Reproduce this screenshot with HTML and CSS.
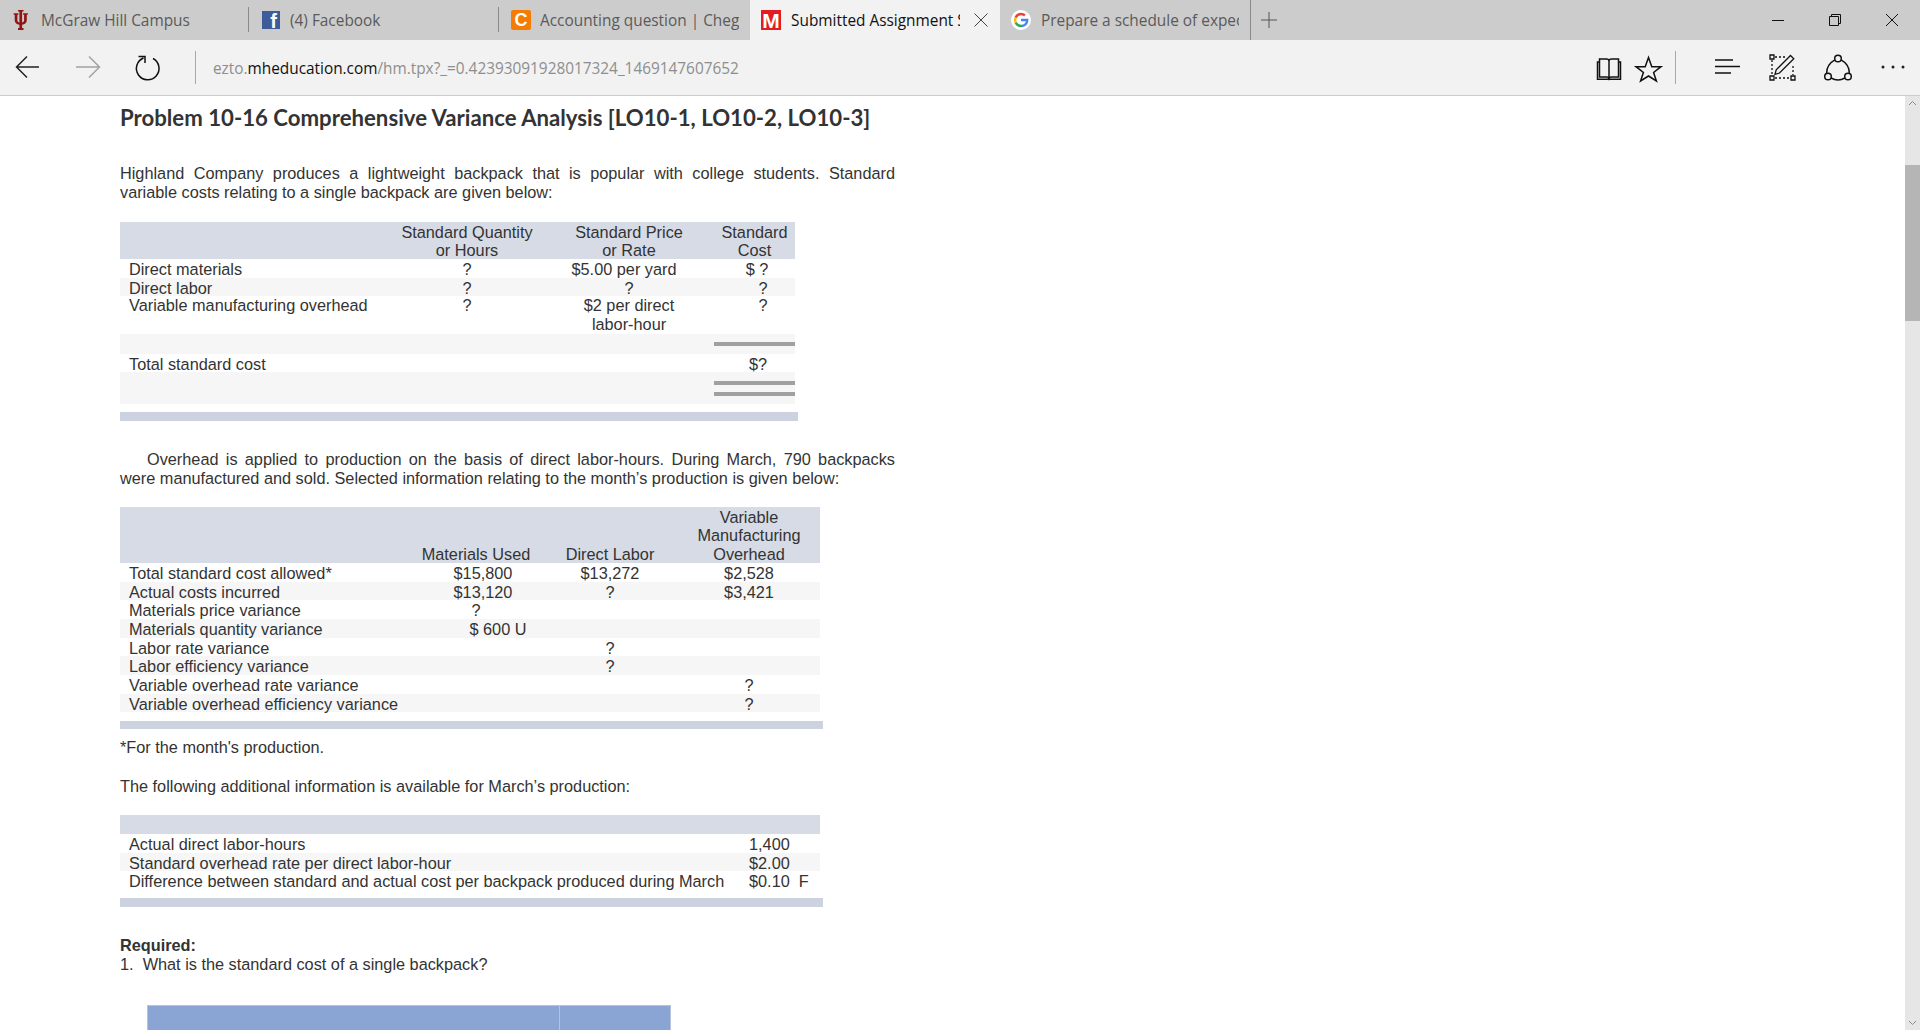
FILE: index.html
```html
<!DOCTYPE html>
<html lang="en">
<head>
<meta charset="utf-8">
<title>Submitted Assignment</title>
<link rel="stylesheet" href="styles.css">
</head>
<body>
<header class="tabbar">
  <div class="tabs">
    <div class="tab">
      <svg class="favicon" viewBox="0 0 20 20"><path fill="#8f1414" d="M7 0h5.500v1.600h-1.400v10.900c1.300-.3 2-.9 2-2.500V4.800h-1V3.200h4.700v1.600h-1V10c0 2.800-1.700 4.300-4.700 4.800V18h1.400v2H7v-2h1.400v-3.200C5.400 14.300 3.700 12.800 3.700 10V4.800h-1V3.200h4.700v1.600h-1V10c0 1.600.7 2.200 2 2.500V1.600H7z"/></svg>
      <span class="tab-title">McGraw Hill Campus</span>
      <span class="tab-sep"></span>
    </div>
    <div class="tab">
      <span class="favicon fb">f</span>
      <span class="tab-title">(4) Facebook</span>
      <span class="tab-sep"></span>
    </div>
    <div class="tab">
      <span class="favicon chegg">C</span>
      <span class="tab-title">Accounting question | Chegg</span>
    </div>
    <div class="tab active">
      <span class="favicon mh">M</span>
      <span class="tab-title">Submitted Assignment S</span>
      <svg class="tab-close" viewBox="0 0 14 14"><path d="M.5.5l13 13M13.500.5l-13 13"/></svg>
    </div>
    <div class="tab last">
      <svg class="favicon" viewBox="0 0 20 20">
        <circle cx="10" cy="10" r="10" fill="#fff"/>
        <path fill="none" stroke="#4285f4" stroke-width="2.400" d="M10 10h6.200c0 3.800-2.700 6-6.200 6"/>
        <path fill="none" stroke="#34a853" stroke-width="2.400" d="M10 16c-2.500 0-4.500-1.400-5.400-3.500"/>
        <path fill="none" stroke="#fbbc05" stroke-width="2.400" d="M4.600 12.500c-.7-1.700-.7-3.400 0-5"/>
        <path fill="none" stroke="#ea4335" stroke-width="2.400" d="M4.600 7.500C5.500 5.400 7.500 4 10 4c1.500 0 2.800.5 3.900 1.500"/>
      </svg>
      <span class="tab-title">Prepare a schedule of expected</span>
    </div>
  </div>
  <div class="newtab">
    <svg class="icon16" viewBox="0 0 16 16"><path d="M8 0v16M0 8h16"/></svg>
  </div>
  <div class="winctrls">
    <div class="winbtn"><svg class="icon14" viewBox="0 0 14 14"><path d="M1 7.500h12"/></svg></div>
    <div class="winbtn"><svg class="icon14" viewBox="0 0 14 14"><path d="M1.500 3.500h9v9h-9zM3.500 3.500v-2h9v9h-2"/></svg></div>
    <div class="winbtn"><svg class="icon14" viewBox="0 0 14 14"><path d="M1 1l12 12M13 1L1 13"/></svg></div>
  </div>
</header>

<nav class="toolbar">
  <svg class="tool back" viewBox="0 0 40 40"><path d="M31 20H8.500M19 9.500L8.500 20 19 30.500"/></svg>
  <svg class="tool next" viewBox="0 0 40 40"><path d="M8 20h23.500M21 9.500L31.500 20 21 30.500"/></svg>
  <svg class="tool next-gap" viewBox="0 0 40 40"><path d="M25 11.500A11.300 11.300 0 1 1 15.500 11M10.500 9.500H17V16"/></svg>
  <span class="tool-sep sep-left"></span>
  <div class="url"><span class="url-dim">ezto.</span><span class="url-host">mheducation.com</span><span class="url-dim">/hm.tpx?_=0.42393091928017324_1469147607652</span></div>
  <svg class="tool" viewBox="0 0 40 40"><path d="M10.500 12h7c1.500 0 2.500.7 2.500 2 0-1.300 1-2 2.500-2h7v18H22c-1 0-1.700.5-2 1.500-.3-1-1-1.500-2-1.500h-7.500zM20 14v16M10.500 15h-2v17.300h23V15h-2"/></svg>
  <svg class="tool" viewBox="0 0 40 40"><path d="M19.500 10.500l3.300 9.200h9.200l-7.400 5.800 2.800 8.500-7.900-5-7.900 5 2.800-8.500L7 19.700h9.200z"/></svg>
  <span class="tool-sep sep-right"></span>
  <svg class="tool hub" viewBox="0 0 40 40"><path d="M7 13h18M7 19.500h25M7 26h16"/></svg>
  <svg class="tool note" viewBox="0 0 40 40"><path d="M8 8h4v4H8zM8 29h4v4H8zM29 29h4v4h-4z"/><path class="dots" d="M13 10h11M10 13v15M13 31h15M31 19v9"/><path d="M28.500 8.500l3.300 3.300L17.500 26l-4.500 1.300 1.200-4.500z"/></svg>
  <svg class="tool share" viewBox="0 0 40 40"><circle cx="20" cy="11.500" r="3.300"/><circle cx="10" cy="29.500" r="3.300"/><circle cx="30" cy="29.500" r="3.300"/><path d="M16.900 12.800C12 15.500 8.500 20.500 8.600 26.400M23.100 12.800C28 15.500 31.500 20.500 31.400 26.400M13.100 31c4.300 2.500 9.500 2.500 13.800 0"/></svg>
  <svg class="tool more" viewBox="0 0 40 40"><circle cx="10" cy="20" r="1.500"/><circle cx="20" cy="20" r="1.500"/><circle cx="30" cy="20" r="1.500"/></svg>
</nav>

<div class="viewport">
  <main class="page">
    <h1 class="title">Problem 10-16 Comprehensive Variance Analysis [LO10-1, LO10-2, LO10-3]</h1>
    <p class="para first"><span class="justline">Highland Company produces a lightweight backpack that is popular with college students. Standard</span> variable costs relating to a single backpack are given below:</p>

    <table class="data t1">
      <colgroup><col class="c1-label"><col class="c1-qty"><col class="c1-price"><col class="c1-cost"></colgroup>
      <thead>
        <tr><th></th><th>Standard Quantity<br>or Hours</th><th>Standard Price<br>or Rate</th><th>Standard<br>Cost</th></tr>
      </thead>
      <tbody>
        <tr class="r19"><td class="label">Direct materials</td><td class="mid">?</td><td class="mid pr10">$5.00 per yard</td><td class="mid pl5">$ ?</td></tr>
        <tr class="alt r18"><td class="label">Direct labor</td><td class="mid">?</td><td class="mid">?</td><td class="mid pl17">?</td></tr>
        <tr class="r38"><td class="label">Variable manufacturing overhead</td><td class="mid">?</td><td class="mid">$2 per direct<br>labor-hour</td><td class="mid pl17">?</td></tr>
        <tr class="alt r20"><td class="bare"></td><td class="bare"></td><td class="bare"></td><td class="bare"><div class="single"></div></td></tr>
        <tr class="r18"><td class="label">Total standard cost</td><td></td><td></td><td class="mid pl7">$?</td></tr>
        <tr class="alt r32"><td class="bare"></td><td class="bare"></td><td class="bare"></td><td class="bare"><div class="double"></div></td></tr>
      </tbody>
    </table>
    <div class="rule r-a"></div>

    <p class="para second">Overhead is applied to production on the basis of direct labor-hours. During March, 790 backpacks were manufactured and sold. Selected information relating to the month’s production is given below:</p>

    <table class="data t2">
      <colgroup><col class="c2-label"><col class="c2-mat"><col class="c2-lab"><col class="c2-var"></colgroup>
      <thead>
        <tr><th></th><th>Materials Used</th><th>Direct Labor</th><th>Variable<br>Manufacturing<br>Overhead</th></tr>
      </thead>
      <tbody class="stripes">
        <tr><td class="label">Total standard cost allowed*</td><td class="mid pl14">$15,800</td><td class="mid">$13,272</td><td class="mid">$2,528</td></tr>
        <tr><td class="label">Actual costs incurred</td><td class="mid pl14">$13,120</td><td class="mid">?</td><td class="mid">$3,421</td></tr>
        <tr><td class="label">Materials price variance</td><td class="mid">?</td><td></td><td></td></tr>
        <tr><td class="label">Materials quantity variance</td><td class="mid pl44">$ 600 U</td><td></td><td></td></tr>
        <tr><td class="label">Labor rate variance</td><td></td><td class="mid">?</td><td></td></tr>
        <tr><td class="label">Labor efficiency variance</td><td></td><td class="mid">?</td><td></td></tr>
        <tr><td class="label">Variable overhead rate variance</td><td></td><td></td><td class="mid">?</td></tr>
        <tr><td class="label">Variable overhead efficiency variance</td><td></td><td></td><td class="mid">?</td></tr>
      </tbody>
    </table>
    <div class="rule r-b"></div>

    <p class="para note-line">*For the month's production.</p>
    <p class="para follow">The following additional information is available for March’s production:</p>

    <table class="data t3">
      <colgroup><col class="c3-label"><col class="c3-val"></colgroup>
      <thead><tr class="h19"><th></th><th></th></tr></thead>
      <tbody class="stripes">
        <tr><td class="label">Actual direct labor-hours</td><td>1,400</td></tr>
        <tr><td class="label">Standard overhead rate per direct labor-hour</td><td>$2.00</td></tr>
        <tr><td class="label">Difference between standard and actual cost per backpack produced during March</td><td>$0.10&nbsp; F</td></tr>
      </tbody>
    </table>
    <div class="rule r-c"></div>

    <p class="para req"><strong>Required:</strong><br>1.&nbsp; What is the standard cost of a single backpack?</p>

    <div class="answer"><div class="answer-a"></div><div class="answer-b"></div></div>
  </main>
  <aside class="scrollbar">
    <svg class="sb-arrow" viewBox="0 0 15 15"><path d="M4 9l3.500-3.500L11 9"/></svg>
    <div class="sb-thumb"></div>
    <svg class="sb-arrow sb-down" viewBox="0 0 15 15"><path d="M4 6l3.500 3.500L11 6"/></svg>
  </aside>
</div>
</body>
</html>
```

FILE: styles.css
```css
* { box-sizing: border-box; }
html, body { margin: 0; height: 100%; }
body {
  display: flex;
  flex-direction: column;
  overflow: hidden;
  background: #fff;
  font-family: "Liberation Sans", Arial, sans-serif;
  color: #333;
}

/* tab strip */
.tabbar {
  display: flex;
  height: 40px;
  flex: none;
  background: #ccc;
}
.tabs {
  display: grid;
  grid-template-columns: 249px 250px 251px 250px 251px;
}
.tab {
  display: flex;
  align-items: center;
  min-width: 0;
  padding-left: 11px;
  font-family: "Open Sans", "Noto Sans", sans-serif;
  font-size: 15.400px;
  color: #5a5a5a;
}
.tab.active { background: #f2f2f2; color: #111; }
.tab.last { border-right: 1px solid #8a8a8a; }
.favicon {
  flex: none;
  width: 20px;
  height: 20px;
  margin-right: 10px;
}
.fb, .chegg, .mh {
  display: flex;
  justify-content: center;
  color: #fff;
  font-family: "Liberation Sans", sans-serif;
  font-weight: 700;
}
.fb {
  width: 18px;
  height: 18px;
  margin-left: 2px;
  background: #3f5c9a;
  font-size: 20px;
  line-height: 21px;
  padding-left: 5px;
  overflow: hidden;
}
.chegg {
  margin-left: 1px;
  margin-right: 9px;
  background: #f57c00;
  border-radius: 2px;
  font-size: 18px;
  line-height: 20px;
}
.mh {
  background: #e31b23;
  font-size: 21px;
  line-height: 21px;
  overflow: hidden;
}
.tab-title {
  flex: 1;
  min-width: 0;
  overflow: hidden;
  white-space: nowrap;
  margin-right: 11px;
}
.tab.active .tab-title { margin-right: 14px; }
.tab-close {
  flex: none;
  width: 14px;
  height: 14px;
  margin-right: 12px;
  fill: none;
  stroke: #444;
  stroke-width: 1;
}
.tab-sep {
  flex: none;
  width: 1px;
  height: 25px;
  margin-top: -1px;
  background: #8a8a8a;
}
.newtab {
  width: 36px;
  display: flex;
  align-items: center;
  justify-content: center;
}
.icon16 { width: 16px; height: 16px; fill: none; stroke: #555; stroke-width: 1; }
.winctrls { display: flex; margin-left: auto; }
.winbtn {
  width: 57px;
  display: flex;
  align-items: center;
  justify-content: center;
}
.icon14 { width: 14px; height: 14px; fill: none; stroke: #111; stroke-width: 1; }

/* toolbar */
.toolbar {
  display: flex;
  align-items: flex-start;
  flex: none;
  height: 56px;
  padding: 7px 7px 0 8px;
  background: #f2f2f2;
  border-bottom: 1px solid #ccc;
}
.tool {
  flex: none;
  width: 40px;
  height: 40px;
  fill: none;
  stroke: #111;
  stroke-width: 1.500;
}
.tool.back { stroke: #222; }
.tool.next { margin-left: 20px; stroke: #a3a3a3; }
.next-gap { margin-left: 20px; }
.tool-sep {
  flex: none;
  width: 1px;
  height: 33px;
  margin-top: 4px;
  background: #a8a8a8;
}
.sep-left { margin-left: 27px; }
.sep-right { margin-left: 6px; }
.url {
  flex: 1;
  margin-left: 17px;
  line-height: 44px;
  font-family: "Open Sans", "Noto Sans", sans-serif;
  font-size: 15.360px;
  white-space: nowrap;
}
.url-dim { color: #8e8e8e; }
.url-host { color: #111; }
.hub { margin-left: 32px; }
.note { margin-left: 14px; stroke-width: 1.300; }
.note .dots { stroke-dasharray: 2 2; }
.share { margin-left: 16px; }
.more { margin-left: 15px; fill: #222; stroke: none; }

/* page */
.viewport {
  flex: 1;
  min-height: 0;
  display: flex;
}
.page {
  flex: 1;
  min-width: 0;
  overflow: hidden;
  padding: 7px 0 0 120px;
}
.title {
  margin: 0;
  height: 30px;
  line-height: 30px;
  font-family: Lato, sans-serif;
  font-size: 22.200px;
  font-weight: 700;
  white-space: nowrap;
}
.para {
  margin: 0;
  width: 775px;
  font-size: 16.300px;
  line-height: 19px;
  text-align: justify;
}
.justline { display: block; text-align-last: justify; }
.first { margin-top: 31px; }
.second { margin-top: 29px; text-indent: 27px; }
.note-line { margin-top: 9px; }
.follow { margin-top: 20px; }
.req { margin-top: 29px; }
.req strong { font-weight: 700; }

.data {
  border-collapse: collapse;
  table-layout: fixed;
  font-size: 16.300px;
}
.data th {
  padding: 0;
  line-height: 18.500px;
  background: #d6dbe6;
  font-weight: 400;
  text-align: center;
  vertical-align: bottom;
}
.data td { padding: 2px 0 0; line-height: 16px; vertical-align: top; }
.data td.bare { padding: 0; }
.data .r38 td { padding-top: 0; line-height: 18.500px; }
.label { padding-left: 9px !important; white-space: nowrap; }
.mid { text-align: center; }
.pr10 { padding-right: 10px !important; }
.pl5 { padding-left: 5px !important; }
.pl7 { padding-left: 7px !important; }
.pl14 { padding-left: 14px !important; }
.pl17 { padding-left: 17px !important; }
.pl44 { padding-left: 44px !important; }
.alt { background: #f6f6f6; }

.t1 { width: 675px; margin-top: 20px; }
.c1-label { width: 270px; }
.c1-qty { width: 154px; }
.c1-price { width: 170px; }
.c1-cost { width: 81px; }
.t1 thead tr { height: 37px; }
.data.t1 th { padding-top: 1px; line-height: 18px; }
.r18 { height: 18px; }
.r19 { height: 19px; }
.r20 { height: 20px; }
.r32 { height: 32px; }
.r38 { height: 38px; }
.single { height: 4px; margin-top: 8px; background: #a0a0a0; }
.double {
  height: 15px;
  margin-top: 9px;
  border-top: 4px solid #a0a0a0;
  border-bottom: 4px solid #a0a0a0;
}

.rule { height: 9px; margin-top: 8px; background: #ccd2df; }
.r-a { width: 678px; }
.r-b { width: 703px; height: 8px; margin-top: 9px; }
.r-c { width: 703px; }

.t2 { width: 700px; margin-top: 19px; }
.c2-label { width: 290px; }
.c2-mat { width: 132px; }
.c2-lab { width: 136px; }
.c2-var { width: 142px; }
.t2 thead tr { height: 56px; }
.stripes tr { height: 19px; }
.stripes tr:nth-child(3n+2) { height: 18px; }
.stripes tr:nth-child(even) { background: #f6f6f6; }

.t3 { width: 700px; margin-top: 19px; }
.c3-label { width: 629px; }
.c3-val { width: 71px; }
.h19 { height: 19px; }

.answer {
  display: flex;
  width: 524px;
  height: 60px;
  margin: 31px 0 0 27px;
  background: #8aa4d3;
  border: 1px solid #b9c3d6;
}
.answer-a { width: 412px; border-right: 1px solid #b9c3d6; }
.answer-b { flex: 1; }

/* scrollbar */
.scrollbar {
  flex: none;
  width: 15px;
  display: flex;
  flex-direction: column;
  background: #e6e6e6;
}
.sb-arrow {
  flex: none;
  width: 15px;
  height: 15px;
  fill: none;
  stroke: #8c8c8c;
  stroke-width: 1;
}
.sb-thumb {
  flex: none;
  height: 156px;
  margin-top: 54px;
  background: #b5b5b5;
}
.sb-down { margin-top: auto; }
```
